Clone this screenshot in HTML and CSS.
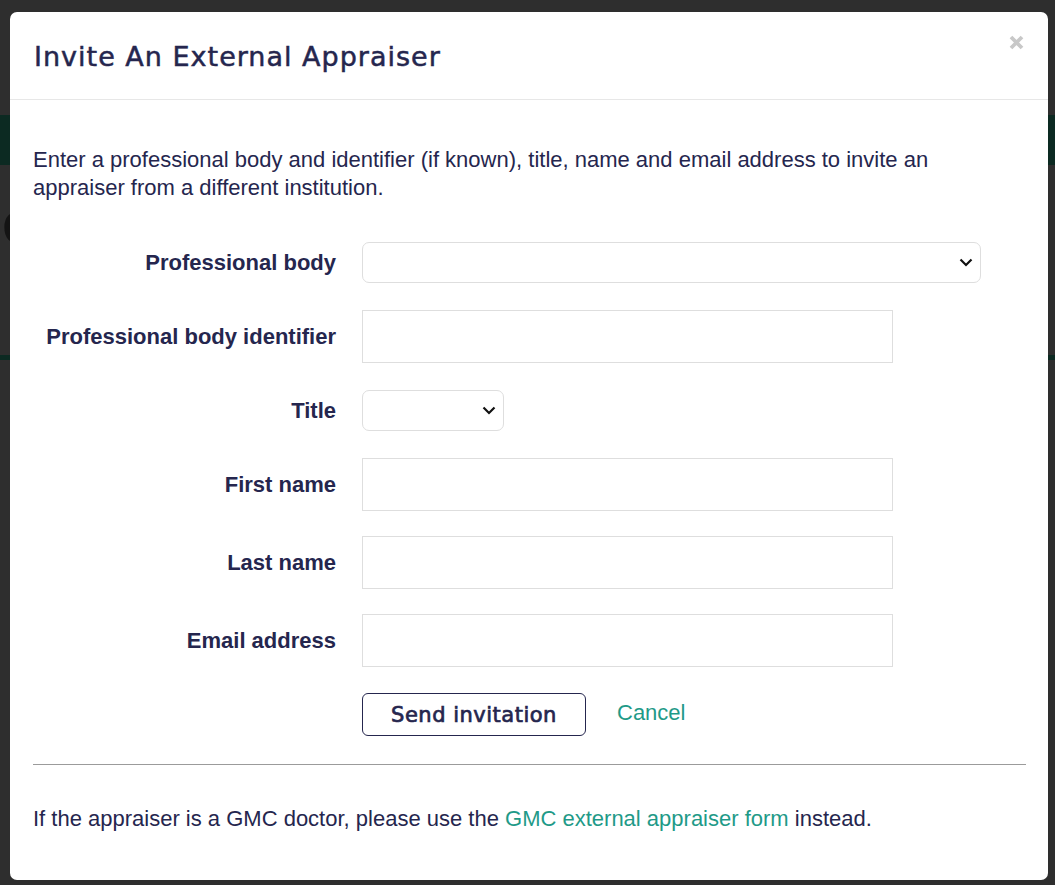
FILE: index.html
```html
<!DOCTYPE html>
<html lang="en">
<head>
<meta charset="utf-8">
<title>Invite An External Appraiser</title>
<link rel="stylesheet" href="styles.css">
</head>
<body>
<div class="page-behind">
  <div class="bg-band"></div>
  <div class="bg-letter">e</div>
  <div class="bg-line"></div>
</div>

<div class="modal">
  <div class="modal-header">
    <h1 class="modal-title">Invite An External Appraiser</h1>
    <button class="close" type="button" aria-label="Close">
      <svg width="15" height="15" viewBox="0 0 15 15"><path d="M2 2L13 13M13 2L2 13" stroke="#c8c8c8" stroke-width="3.8" stroke-linecap="butt"/></svg>
    </button>
  </div>
  <div class="modal-body">
    <p class="intro">Enter a professional body and identifier (if known), title, name and email address to invite an appraiser from a different institution.</p>
    <form class="form">
      <div class="row row-select spaced">
        <label class="label" for="pb">Professional body</label>
        <div class="select-wrap wide">
          <select id="pb" class="select"><option></option></select>
          <svg class="chev" width="14" height="9" viewBox="0 0 14 9"><path d="M1.5 1.5L7 7L12.5 1.5" fill="none" stroke="#111" stroke-width="2.2"/></svg>
        </div>
      </div>
      <div class="row spaced">
        <label class="label" for="pbi">Professional body identifier</label>
        <input id="pbi" class="input" type="text">
      </div>
      <div class="row row-select spaced">
        <label class="label" for="title">Title</label>
        <div class="select-wrap narrow">
          <select id="title" class="select"><option></option></select>
          <svg class="chev" width="14" height="9" viewBox="0 0 14 9"><path d="M1.5 1.5L7 7L12.5 1.5" fill="none" stroke="#111" stroke-width="2.2"/></svg>
        </div>
      </div>
      <div class="row">
        <label class="label" for="fn">First name</label>
        <input id="fn" class="input" type="text">
      </div>
      <div class="row">
        <label class="label" for="ln">Last name</label>
        <input id="ln" class="input" type="text">
      </div>
      <div class="row">
        <label class="label" for="em">Email address</label>
        <input id="em" class="input" type="email">
      </div>
      <div class="row actions">
        <span class="label"></span>
        <div class="buttons">
          <button class="btn" type="button">Send invitation</button>
          <a class="link cancel" href="#">Cancel</a>
        </div>
      </div>
    </form>
    <hr class="divider">
    <p class="footnote">If the appraiser is a GMC doctor, please use the <a class="link" href="#">GMC external appraiser form</a> instead.</p>
  </div>
</div>
</body>
</html>
```

FILE: styles.css
```css
html, body {
  margin: 0;
  padding: 0;
}
body {
  background: #2e2e2e;
  font-family: "Liberation Sans", Arial, sans-serif;
  color: #25264e;
  height: 885px;
  overflow: hidden;
}
.page-behind {
  padding-top: 115px;
}
.bg-band {
  height: 50px;
  background: #0c2a22;
}
.bg-letter {
  margin-top: 28px;
  font-size: 60px;
  line-height: 60px;
  color: #141414;
  font-weight: 700;
  padding-left: 2px;
}
.bg-line {
  margin-top: 102px;
  height: 5px;
  background: #0c2a22;
}

.modal {
  position: fixed;
  top: 12px;
  left: 10px;
  width: 1038px;
  height: 868px;
  background: #fff;
  border-radius: 7px;
  box-sizing: border-box;
}
.modal-header {
  height: 88px;
  box-sizing: border-box;
  border-bottom: 1px solid #e7e7e7;
  display: flex;
  align-items: flex-start;
  justify-content: space-between;
  padding: 0 24px 0 24px;
}
.modal-title {
  margin: 0;
  padding-top: 29px;
  font-family: "DejaVu Sans", sans-serif;
  font-weight: 500;
  font-size: 27px;
  line-height: 32px;
  letter-spacing: 1px;
  color: #25264e;
  -webkit-text-stroke: 0.5px #25264e;
}
.close {
  border: 0;
  background: none;
  padding: 0;
  margin-top: 23px;
  margin-right: 0;
  width: 15px;
  height: 15px;
  cursor: pointer;
  display: flex;
}
.modal-body {
  padding: 46px 22px 0 23px;
}
.intro {
  margin: 0 0 40px;
  font-size: 22px;
  line-height: 28px;
  padding-right: 60px;
}
.form {
  display: flex;
  flex-direction: column;
  gap: 25px;
}
.row {
  display: grid;
  grid-template-columns: 303px 1fr;
  column-gap: 26px;
  align-items: center;
}
.row.spaced {
  margin-bottom: 2px;
}
.label {
  text-align: right;
  font-weight: 700;
  font-size: 22px;
  line-height: 26px;
}
.input {
  width: 531px;
  height: 53px;
  box-sizing: border-box;
  border: 1px solid #dedede;
  border-radius: 0;
  font-size: 20px;
  padding: 6px 12px;
  font-family: inherit;
}
.select-wrap {
  position: relative;
  height: 41px;
}
.select-wrap.wide { width: 619px; }
.select-wrap.narrow { width: 142px; }
.select {
  appearance: none;
  -webkit-appearance: none;
  width: 100%;
  height: 41px;
  box-sizing: border-box;
  border: 1px solid #dedede;
  border-radius: 7px;
  background: #fff;
  font-size: 20px;
  font-family: inherit;
}
.chev {
  position: absolute;
  right: 8px;
  top: 16px;
  pointer-events: none;
}
.actions {
  margin-top: 1px;
}
.buttons {
  display: flex;
  align-items: center;
  gap: 31px;
}
.btn {
  width: 224px;
  height: 43px;
  box-sizing: border-box;
  border: 1px solid #25264e;
  border-radius: 6px;
  background: #fff;
  color: #25264e;
  font-family: "DejaVu Sans", sans-serif;
  font-weight: 400;
  font-size: 21px;
  letter-spacing: 0.5px;
  -webkit-text-stroke: 0.7px #25264e;
  padding: 0;
  cursor: pointer;
}
.link {
  color: #1f9a88;
  text-decoration: none;
}
.cancel {
  font-size: 22px;
  margin-top: -4px;
}
.divider {
  margin: 28px 0 0;
  border: 0;
  border-top: 1px solid #9b9b9b;
  height: 0;
}
.footnote {
  margin: 41px 0 0;
  font-size: 22px;
  line-height: 26px;
}
```
